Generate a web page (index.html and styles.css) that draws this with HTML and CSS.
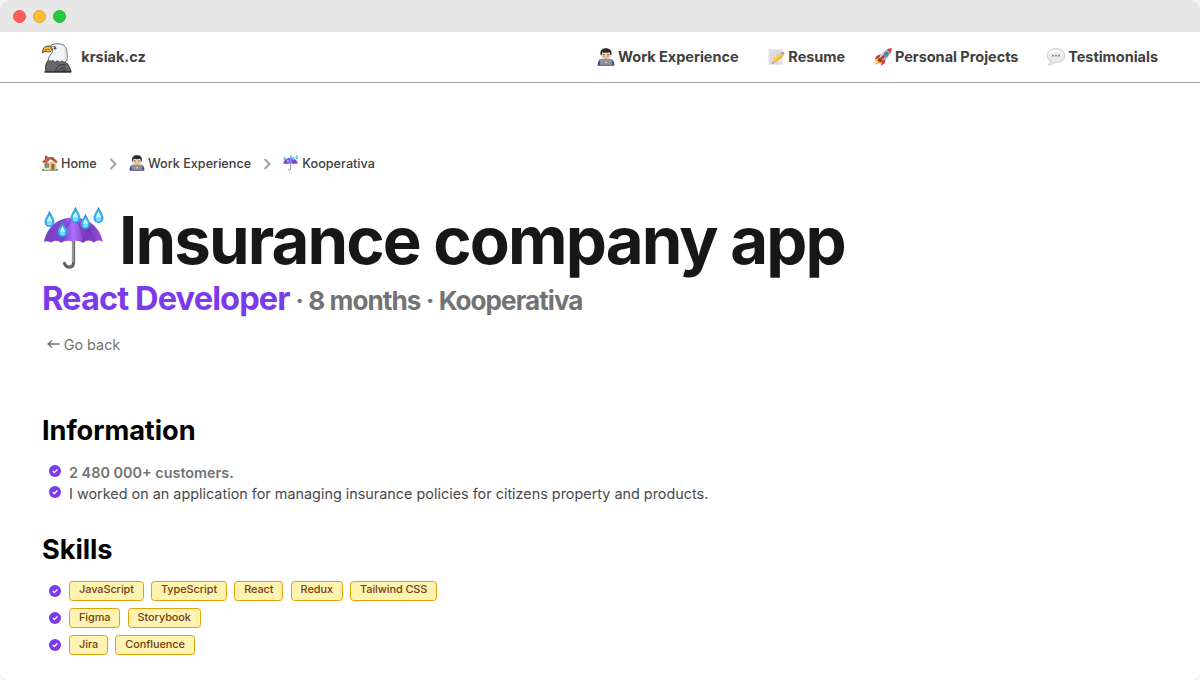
FILE: index.html
```html
<!DOCTYPE html>
<html lang="en">
<head>
<meta charset="utf-8">
<title>Insurance company app</title>
<link rel="stylesheet" href="styles.css">
</head>
<body>
<svg class="defs" width="0" height="0">
  <defs>
    <linearGradient id="canopy" x1="0" x2="1" y1="0" y2="0"><stop offset="0" stop-color="#7140b4"/><stop offset=".35" stop-color="#8748dc"/><stop offset=".5" stop-color="#ac70fa"/><stop offset=".72" stop-color="#7739bd"/><stop offset="1" stop-color="#9752e0"/></linearGradient>
    <linearGradient id="drop" x1="0" x2="0" y1="0" y2="1"><stop offset="0" stop-color="#2788c5"/><stop offset=".5" stop-color="#43b7ed"/><stop offset="1" stop-color="#1598e6"/></linearGradient>
    <symbol id="raindrop" viewBox="0 0 12 18"><path d="M6 .5C5 4 1 8 1 12a5 5 0 0 0 10 0C11 8 7 4 6 .5Z" fill="url(#drop)"/><path d="M6 5C5 8 3.3 9.700 3.300 12.300q2.700-1.800 5.400 0C8.700 9.700 7 8 6 5Z" fill="#c5f5ff"/><ellipse cx="6" cy="13.500" rx="2.800" ry="2" fill="#79dcff"/></symbol>
    <symbol id="umbrella" viewBox="0 0 64 64">
      <path d="M30.500 34v22c0 5-7 6-9 .5" fill="none" stroke="#66666a" stroke-width="3.200" stroke-linecap="round"/>
      <path d="M30 35v20" stroke="#b8b8bb" stroke-width="1.200"/>
      <path d="M1 35C4 20 15 10.500 30 10.500S57 20 60 35q-5-3-9 .5-6-4-11 .5-6-4-10-1-6-3-12 .7-5-4-10-.2-4-2-7-.5Z" fill="url(#canopy)"/>
      <path d="M28 13q-7 8-9 22M33 13q7 9 8 22M40 14q8 9 11 21" fill="none" stroke="#613099" stroke-width="1.300" opacity=".5"/>
      <use href="#raindrop" x="0" y="3" width="13" height="18"/><use href="#raindrop" x="26" y="-1" width="13" height="18"/><use href="#raindrop" x="13" y="14" width="13" height="17"/><use href="#raindrop" x="36" y="6" width="13" height="17"/><use href="#raindrop" x="49" y="-1" width="13" height="18"/>
    </symbol>
    <symbol id="developer" viewBox="0 0 54 54">
      <path d="M2 53c0-12 3-18 11-20h28c8 2 11 8 11 20Z" fill="#3349a5"/>
      <path d="M20 26h14v12H20Z" fill="#dab491"/>
      <path d="M13 14h28v11c0 8-7 13-14 13S13 33 13 25Z" fill="#f2d3b3"/>
      <path d="M11 22C8 7 15 1 27 1s19 6 16 21l-3-1-2-8q-11 3-22 0l-2 8Z" fill="#302a29"/>
      <path d="M17 20h7M30 20h7" stroke="#554238" stroke-width="2"/><circle cx="21" cy="24" r="1.600" fill="#372d29"/><circle cx="33" cy="24" r="1.600" fill="#372d29"/><path d="M23 30q4 2 8 0" fill="none" stroke="#b87868" stroke-width="2"/>
      <path d="M8 35q0-2 2-2h34q2 0 2 2l-1 16H9Z" fill="#8e9297"/><path d="M8 50h38v3H8Z" fill="#70757a"/><circle cx="27" cy="43" r="2.500" fill="#eef0f2"/>
    </symbol>
    <symbol id="memo" viewBox="0 0 54 54">
      <path d="M4 3h43v48H4Z" fill="#e6e6e8"/><path d="M10 10h29M9 16h32M9 22h25M9 28h20M9 34h12M9 40h10M9 46h30" stroke="#c4c4c8" stroke-width="2" stroke-dasharray="7 2"/>
      <path d="m16 47 4-13 7 8Z" fill="#e7bd91"/><path d="m19 34 21-19 9 8-23 20Z" fill="#ffbd24"/><path d="m21 37 22-20" stroke="#ffe16f" stroke-width="3"/><path d="m26 42 22-20" stroke="#dc8b18" stroke-width="2"/><path d="m38 17 4-4 9 8-4 4Z" fill="#b7c2c7"/><path d="m42 13 3-2q3-1 5 2l2 3q1 2-1 5Z" fill="#ed7777"/><path d="m16 47 1-5 3 3Z" fill="#443a35"/>
    </symbol>
    <symbol id="rocket" viewBox="0 0 54 54">
      <path d="M13 34 1 38l8 1-7 12 14-7 3 4 5-8Z" fill="#ff9d16"/><path d="m12 36-4 9 11-6Z" fill="#ffe33b"/>
      <path d="m21 19-13 4-7 12 15-5Zm14 14-3 13-11 7 3-15Z" fill="#dd352b"/>
      <path d="M15 32C22 14 34 3 53 1c-1 19-13 31-31 39Z" fill="#8fa0b1"/><path d="m17 30 25-25q-19 6-27 27Z" fill="#d7e3eb"/><path d="M39 4q7-3 14-3 0 7-3 14Z" fill="#e33b2d"/><path d="M15 30q6 2 9 9l-4 4q-7-1-9-8Z" fill="#494b57"/>
      <circle cx="36" cy="17" r="6" fill="#4d6476"/><circle cx="36" cy="17" r="4" fill="#2098dc"/><path d="m18 36 13-13" stroke="#c52f2b" stroke-width="6"/>
    </symbol>
    <symbol id="speech" viewBox="0 0 54 54"><path d="M27 2C12 2 1 10 1 23c0 8 5 14 11 17-1 6-4 8-8 11 8 0 14-2 19-8 17 1 30-6 30-20C53 10 42 2 27 2Z" fill="#e9e9eb" stroke="#b5b6b9" stroke-width="2"/><path d="M27 5C14 5 5 11 4 21 14 12 38 11 50 21 48 11 39 5 27 5Z" fill="#fafafa"/><g fill="#747579"><circle cx="18" cy="23" r="2.500"/><circle cx="27" cy="23" r="2.500"/><circle cx="36" cy="23" r="2.500"/></g></symbol>
    <symbol id="house" viewBox="0 0 48 48">
      <path d="M5 20h38v24H5Z" fill="#f2dfb8"/><path d="M24 20h19v24H24Z" fill="#e0c698"/><path d="M9 2h7v15H9Z" fill="#9c5142"/>
      <path d="m1 20 15-14h17l14 14-3 4-9-5-9-6-9 7-2 3H3Z" fill="#b84f40"/><path d="m4 20 13-12h10L15 21Z" fill="#c96454"/>
      <path d="M9 26h11v11H9Z" fill="#50a3d5" stroke="#8e5b35" stroke-width="2"/><path d="M28 27h9v17h-9Z" fill="#9b633a"/><path d="M1 44h46v3H1Z" fill="#72895a"/><circle cx="3" cy="44" r="3" fill="#52a345"/><circle cx="45" cy="44" r="3" fill="#52a345"/>
    </symbol>
    <symbol id="check" viewBox="0 0 12 12"><circle cx="6" cy="6" r="6" fill="#7c3aed"/><path d="m3.700 6.100 1.600 1.400 3.100-3" fill="none" stroke="#fff" stroke-width="1.300"/></symbol>
    <symbol id="chevron" viewBox="0 0 8 12"><path d="m1.500 1 5 5-5 5" fill="none" stroke="#a0a0a0" stroke-width="1.900"/></symbol>
  </defs>
</svg>
<div class="window">
  <div class="titlebar"><i class="dot red"></i><i class="dot amber"></i><i class="dot green"></i></div>
  <header class="header">
    <a class="brand">
      <svg class="eagle" viewBox="0 0 90 90">
        <path d="M14 87c-2-16 0-27 7-34l44 2c8 2 16 11 22 29v3Z" fill="#69656d" stroke="#292729" stroke-width="2.500"/>
        <path d="m21 53 8 3 5-3 7 6 7-5 7 5 5-4 8 4 7-6C78 28 77 5 49 5 38 5 30 7 26 13c8 5 10 13 5 20-5 6-9 10-10 20Z" fill="#f2f4f5" stroke="#373538" stroke-width="2"/>
        <path d="M64 12q14 11 10 39l-6 4q4-24-4-43Z" fill="#dadde1"/>
        <path d="M27 12C15 10 3 15 5 32c5-6 9-6 14-4 8 3 14-3 13-9Z" fill="#f8b536" stroke="#373030" stroke-width="2.500"/><path d="M10 23q10-4 17 0" fill="none" stroke="#bd7b28" stroke-width="3"/>
        <path d="m31 13 13 1" stroke="#66646a" stroke-width="2.500"/><circle cx="41" cy="18" r="3.500" fill="#4f5058"/>
        <path d="M42 86c3-18 15-23 29-19M49 87q5-12 21-12M58 87q5-6 16-5" fill="none" stroke="#302e33" stroke-width="2.500"/><path d="M9 87h79" stroke="#242226" stroke-width="3"/>
      </svg><span>krsiak.cz</span>
    </a>
    <nav class="nav">
      <a><svg><use href="#developer"/></svg><span>Work Experience</span></a>
      <a><svg><use href="#memo"/></svg><span>Resume</span></a>
      <a><svg><use href="#rocket"/></svg><span>Personal Projects</span></a>
      <a><svg><use href="#speech"/></svg><span>Testimonials</span></a>
    </nav>
  </header>
  <main>
    <div class="crumbs">
      <a><svg class="emoji"><use href="#house"/></svg>Home</a><svg class="chevron"><use href="#chevron"/></svg>
      <a><svg class="emoji"><use href="#developer"/></svg>Work Experience</a><svg class="chevron"><use href="#chevron"/></svg>
      <a><svg class="emoji"><use href="#umbrella"/></svg>Kooperativa</a>
    </div>
    <h1><svg><use href="#umbrella"/></svg><span>Insurance company app</span></h1>
    <p class="role"><strong>React Developer</strong><span class="meta">· 8 months · Kooperativa</span></p>
    <a class="back"><svg viewBox="0 0 13 10"><path d="M12.500 5H1M5 1.500 1 5l4 3.500" fill="none" stroke="currentColor" stroke-width="1.300"/></svg>Go back</a>
    <h2>Information</h2>
    <ul class="facts">
      <li><svg><use href="#check"/></svg><b>2 480 000+ customers.</b></li>
      <li><svg><use href="#check"/></svg><span>I worked on an application for managing insurance policies for citizens property and products.</span></li>
    </ul>
    <h2 class="skills-title">Skills</h2>
    <ul class="skills">
      <li><svg><use href="#check"/></svg><span class="tag">JavaScript</span><span class="tag">TypeScript</span><span class="tag">React</span><span class="tag">Redux</span><span class="tag">Tailwind CSS</span></li>
      <li><svg><use href="#check"/></svg><span class="tag">Figma</span><span class="tag">Storybook</span></li>
      <li><svg><use href="#check"/></svg><span class="tag">Jira</span><span class="tag">Confluence</span></li>
    </ul>
  </main>
</div>
</body>
</html>
```
FILE: styles.css
```css
* { box-sizing: border-box; }
body { margin: 0; font-family: Inter, sans-serif; background: #f4f4f4; }
.defs { display: block; height: 0; }
svg { display: block; flex: none; }
.window { height: 680px; overflow: hidden; border-radius: 10px; background: #fff; }
.titlebar { display: flex; gap: 7px; height: 32px; padding: 10.400px 13.400px; background: #e7e7e7; }
.dot { width: 13px; height: 13px; border-radius: 50%; }
.red { background: #ff5f57; border: .5px solid #e2544d; }
.amber { background: #febc2e; border: .5px solid #dfa429; }
.green { background: #28c840; border: .5px solid #24ae38; }
.header { display: flex; align-items: center; justify-content: space-between; height: 51px; padding: 0 42px 0 41px; border-bottom: 1px solid #a3a3a3; color: #404040; font-size: 14.500px; font-weight: 700; line-height: 20px; letter-spacing: -.020px; }
.brand { display: flex; align-items: center; gap: 9.300px; }
.eagle { width: 31px; height: 31px; }
.nav { display: flex; gap: 28.700px; }
.nav a { display: flex; align-items: center; gap: 3px; }
.nav svg { width: 18px; height: 18px; }
main { padding: 70px 42px 0; }
.crumbs { display: flex; align-items: center; height: 20px; font-size: 12.700px; font-weight: 500; color: #404040; }
.crumbs a { display: flex; align-items: center; gap: 3px; letter-spacing: -.020px; }
.emoji { width: 16px; height: 16px; }
.chevron { width: 8px; height: 12px; margin: 1px 12.100px 0; }
h1 { display: flex; height: 66px; margin: 34px 0 0; font-size: 65.300px; line-height: 68px; letter-spacing: -1.890px; color: #171717; gap: 12px; }
h1 svg { width: 64px; height: 64px; margin-left: 1px; }
.role { display: flex; align-items: baseline; gap: 5.700px; height: 36px; margin: 7px 0 0; line-height: 36px; font-weight: 700; color: #737373; }
.role strong { font-size: 32.600px; font-weight: 700; letter-spacing: -.900px; color: #7c3aed; }
.meta { font-size: 26.100px; letter-spacing: -.950px; }
.back { display: flex; align-items: center; gap: 3.700px; height: 20px; margin: 18px 0 0 5px; font-size: 14.400px; color: #737373; }
.back svg { width: 13px; height: 10px; }
h2 { height: 32px; margin: 61px 0 0; font-size: 27.200px; line-height: 32px; letter-spacing: -.070px; color: #000; }
ul { list-style: none; padding: 0 0 0 7px; margin: 0; }
li { display: flex; align-items: center; }
li svg { width: 12px; height: 12px; margin-right: 8px; }
.facts { margin-top: 15px; font-size: 14.400px; line-height: 21px; color: #4a4a4a; }
.facts svg { margin-top: -2.500px; }
.facts b { font-weight: 600; color: #737373; }
.skills-title { margin-top: 30px; }
.skills { margin-top: 15px; display: grid; gap: 7.200px; }
.skills svg { margin-top: -1px; }
.skills li { height: 20px; }
.tag { height: 20px; padding: 0 9px; margin-right: 7.100px; border: 1px solid #e5a007; border-radius: 3.500px; background: #fef3b0; color: #713f12; font-size: 10.900px; letter-spacing: -.060px; font-weight: 500; line-height: 16px; }
.skills li:first-child .tag { line-height: 15px; }
```
